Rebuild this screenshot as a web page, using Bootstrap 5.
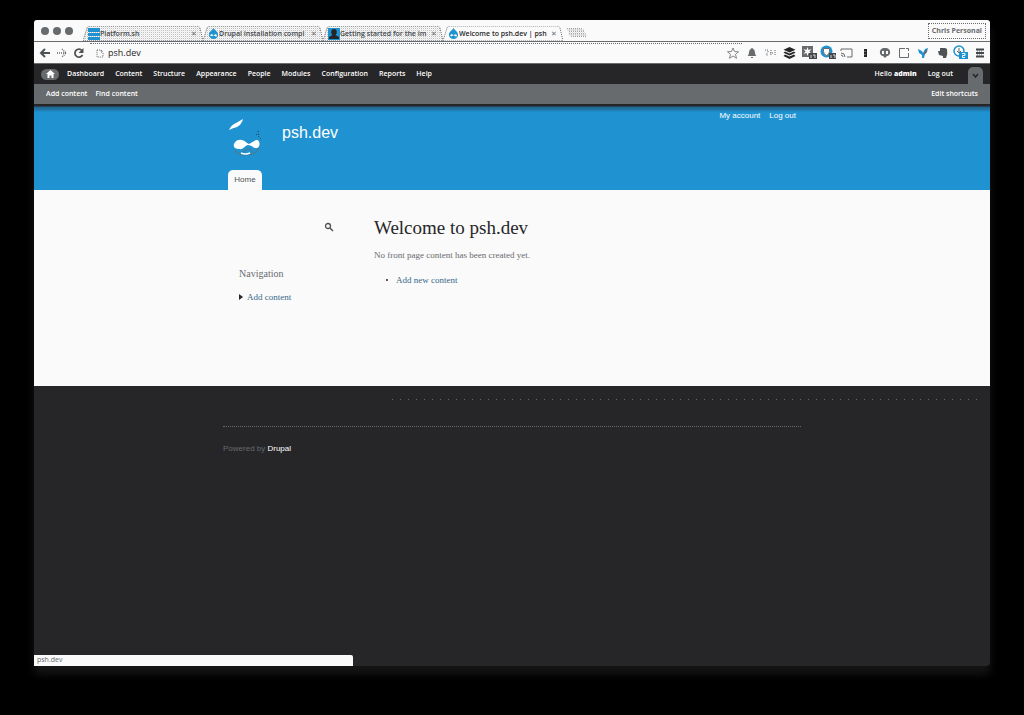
<!DOCTYPE html>
<html lang="en">
<head>
<meta charset="utf-8">
<meta name="viewport" content="width=device-width, initial-scale=1">
<title>Welcome to psh.dev | psh.dev</title>
<link href="https://cdn.jsdelivr.net/npm/bootstrap@5.3.0/dist/css/bootstrap.min.css" rel="stylesheet">
<style>
:root{--ink:#262628;--slate:#676b6e;--sky:#1f93d1;--paper:#fafafa}
body{background:#000;color:var(--slate);font-family:"Open Sans",sans-serif;font-size:7px;line-height:10px}
a{text-decoration:none;color:inherit}
button{background:none;border:0;padding:0;color:inherit}
svg{display:block;flex:none}
.browser{margin:20px 34px 49px;min-height:calc(100vh - 69px);background:var(--ink);border-radius:3px 3px 4px 4px;box-shadow:0 8px 8px #161617}
.tabstrip{height:22px;background:var(--paper);border-bottom:1px solid var(--slate);border-radius:3px 3px 0 0}
.lights{gap:4px;padding-left:7px;width:49px}
.lights i{width:8px;height:8px;border-radius:50%;background:var(--slate)}
.tab{width:120px;height:15px;padding:0 6px 0 5px;font-weight:600;color:#676b6e}
.tab .shape{position:absolute;inset:0;width:100%;height:100%}
.tab>*{position:relative}
.tab .title{font-size:7px;color:#45484b}
.tab.active .title{color:var(--ink)}
.profile{height:16px;padding:0 3px;margin:3px 4px 0 0;border:1px dotted var(--slate);font-size:7px;font-weight:700}
.navbar-row{height:22px;background:var(--paper);border-bottom:1px solid var(--slate);padding:0 1px 0 5px}
.nav-btn{width:17px}
.omnibox{height:19px;border-top:1px dotted var(--slate);padding-left:6px}
.omnibox input{border:0;background:none;outline:0;padding:0;font-size:9px;line-height:16px;height:16px;color:var(--ink)}
.ext{width:19px}
.ext svg{margin:0 auto}
.adminbar{height:20px;background:var(--ink);color:#fff;padding:0 7px;font-weight:600}
.adminbar .links{gap:11px}
.home{width:18px;height:11px;border-radius:6px;background:var(--slate)}
.drawer{width:15px;height:17px;border-radius:5px 5px 0 0;background:var(--slate);color:var(--ink)}
.shortcuts{height:20px;background:var(--slate);color:#fff;padding:0 12px;font-weight:600}
.site{max-width:578px;margin:0 auto;font-family:"Liberation Sans",sans-serif}
.masthead{min-height:86px;background:linear-gradient(var(--ink) 2px,#22658b 3px,#2179ab 6px,var(--sky) 8px);color:#fff}
.masthead .site{height:86px}
.logo{margin:13px 0 0 5px}
.sitename{font-size:16px;line-height:20px;margin:19px 0 0 18px}
.usermenu{font-size:8px;gap:9px;padding:7px 5px 0 0}
.pagetab{width:34px;height:20px;border-radius:5px 5px 0 0;background:var(--paper);color:#505356;font-size:8px;margin-left:5px}
.content-area{min-height:196px;background:var(--paper)}
.content-area .site{font-family:"Liberation Serif",serif}
.sidebar{width:151px;padding:31px 0 0 16px}
.sidebar .search{margin:0 38px 0 auto}
.sidebar h2{font-size:10px;line-height:12px;margin:35px 0 11px}
.welcome{padding-top:26px}
.welcome h1{font-size:19px;line-height:24px;color:var(--ink);margin:0 0 9px}
.welcome p{font-size:9px;line-height:12px;margin:0 0 13px}
.story{color:#37698a;font-size:9px;line-height:12px}
.bullet{width:2px;height:2px;border-radius:50%;background:var(--ink)}
.dots{height:1px;margin:13px 12px 26px 358px;background:repeating-linear-gradient(90deg,var(--slate) 0 1px,transparent 1px 8px)}
.rule{border-top:1px dotted var(--slate);padding-top:17px;font-size:8px}
.statusbar{width:319px;height:11px;background:var(--paper);border-radius:0 2px 0 0;padding-left:3px}
</style>
</head>
<body>
<svg width="0" height="0" class="position-absolute" aria-hidden="true">
<defs>
<pattern id="mesh" width="2" height="2" patternUnits="userSpaceOnUse"><path fill="#676b6e" d="M0 0h1v1H0z" opacity=".75"/><path fill="#676b6e" d="M1 1h1v1H1z" opacity=".2"/></pattern>
<symbol id="drop" viewBox="0 0 12 12"><path fill="#1f93d1" d="M6 0C7 2 11 4 11 7.500a5 4.500 0 0 1-10 0C1 4 5 2 6 0z"/><path fill="#fafafa" d="M3 7c2-1 2.500 1 3.500.500S8.500 6 9.500 7.500 8.500 10 7 8.500s-2 1-3.500.500S2.500 7.500 3 7z"/></symbol>
</defs>
</svg>
<div class="browser d-flex flex-column">
  <header>
    <div class="tabstrip d-flex align-items-end">
      <div class="lights d-flex align-self-center"><i></i><i></i><i></i></div>
      <div class="tab position-relative d-flex align-items-center">
        <svg class="shape" viewBox="0 0 120 15" preserveAspectRatio="none"><path d="M0 15 4 2q1-2 3-2h107q2 0 3 2l3 13z" fill="url(#mesh)" fill-opacity=".55" stroke="#676b6e" stroke-dasharray="1 1"/></svg>
        <svg width="12" height="12" viewBox="0 0 12 12"><path fill="#1f93d1" d="M0 0h12v4H0zM0 5h12v3H0zM0 9h12v3H0z"/></svg>
        <span class="title text-nowrap overflow-hidden flex-grow-1">Platform.sh</span><button aria-label="Close tab">✕</button>
      </div>
      <div class="tab position-relative d-flex align-items-center">
        <svg class="shape" viewBox="0 0 120 15" preserveAspectRatio="none"><path d="M0 15 4 2q1-2 3-2h107q2 0 3 2l3 13z" fill="url(#mesh)" fill-opacity=".55" stroke="#676b6e" stroke-dasharray="1 1"/></svg>
        <svg width="11" height="11"><use href="#drop"/></svg>
        <span class="title text-nowrap overflow-hidden flex-grow-1">Drupal installation compl</span><button aria-label="Close tab">✕</button>
      </div>
      <div class="tab position-relative d-flex align-items-center">
        <svg class="shape" viewBox="0 0 120 15" preserveAspectRatio="none"><path d="M0 15 4 2q1-2 3-2h107q2 0 3 2l3 13z" fill="url(#mesh)" fill-opacity=".55" stroke="#676b6e" stroke-dasharray="1 1"/></svg>
        <svg width="12" height="12" viewBox="0 0 12 12"><path fill="#1f93d1" d="M0 0h12v12H0z"/><path fill="#262628" d="M6 1c4 0 3 5 1.500 6L11 9v2H1V9l3.500-2C3 6 2 1 6 1z"/></svg>
        <span class="title text-nowrap overflow-hidden flex-grow-1">Getting started for the im</span><button aria-label="Close tab">✕</button>
      </div>
      <div class="tab active position-relative d-flex align-items-center">
        <svg class="shape" viewBox="0 0 120 15" preserveAspectRatio="none"><path d="M0 15 4 2q1-2 3-2h107q2 0 3 2l3 13z" fill="#fafafa" stroke="#676b6e" stroke-dasharray="1 1"/></svg>
        <svg width="11" height="11"><use href="#drop"/></svg>
        <span class="title text-nowrap overflow-hidden flex-grow-1">Welcome to psh.dev | psh</span><button aria-label="Close tab">✕</button>
      </div>
      <button class="align-self-end mb-1 ms-1" aria-label="New tab"><svg width="20" height="9" viewBox="0 0 20 11" preserveAspectRatio="none"><path d="M0 0h14q2 0 3 2l3 9H5Q3 11 2 8z" fill="url(#mesh)"/></svg></button>
      <button class="profile ms-auto align-self-start">Chris Personal</button>
    </div>
    <div class="navbar-row d-flex align-items-center">
      <button class="nav-btn" aria-label="Back"><svg width="12" height="12" viewBox="0 0 12 12"><path d="M11 6H2M6 2 2 6l4 4" fill="none" stroke="#505356" stroke-width="2"/></svg></button>
      <button class="nav-btn" aria-label="Forward"><svg width="12" height="12" viewBox="0 0 12 12"><path d="M1 6h9M6 2l4 4-4 4" fill="none" stroke="#676b6e" stroke-width="1.500" stroke-dasharray="1 1"/></svg></button>
      <button class="nav-btn" aria-label="Reload"><svg width="12" height="12" viewBox="0 0 12 12"><path d="M9 3.500A4 4 0 1 0 9.500 8" fill="none" stroke="#505356" stroke-width="1.800"/><path fill="#505356" d="M10.500 1v5h-5z"/></svg></button>
      <div class="omnibox d-flex align-items-center flex-grow-1">
        <svg width="8" height="9" viewBox="0 0 8 9"><path d="M1 1h4l2 2v5H1zM5 1v2h2" fill="none" stroke="#676b6e" stroke-dasharray="1 1"/></svg>
        <label class="visually-hidden" for="address">Address</label>
        <input id="address" class="flex-grow-1 ms-1" type="text" value="psh.dev">
        <button class="ext" aria-label="Bookmark"><svg width="12" height="12" viewBox="0 0 12 12"><path d="m6 1 1.500 3.500 4 .3-3 2.500 1 4L6 9l-3.500 2.300 1-4-3-2.500 4-.3z" fill="none" stroke="#676b6e" stroke-width=".8"/></svg></button>
      </div>
      <button class="ext" aria-label="Notifications"><svg width="12" height="12" viewBox="0 0 12 12"><path fill="#676b6e" d="M6 1c1 0 1 1 1 1 3 1 1 5 3.500 7h-9C4 7 2 3 5 2c0 0 0-1 1-1zM5 10h2v1H5z"/></svg></button>
      <button class="ext" aria-label="Timer"><svg width="13" height="12" viewBox="0 0 13 12"><path d="M1 3h3v2L2 8h2M7 3v6M6 6h3M11 3v6" fill="none" stroke="#676b6e" stroke-dasharray="1 1"/></svg></button>
      <button class="ext" aria-label="Buffer"><svg width="13" height="12" viewBox="0 0 13 12"><path fill="#262628" d="m6.500 0 6 2.700-6 2.700-6-2.700zM2 4.500l4.500 2 4.500-2 1.500 1.200-6 2.800-6-2.800zM2 7.500l4.500 2 4.500-2L12.500 9l-6 3-6-3z"/></svg></button>
      <button class="ext" aria-label="Favorites"><svg width="16" height="15" viewBox="0 0 16 15"><path fill="#676b6e" d="M1 1h11v11H1z"/><path fill="#fafafa" d="m6.500 2 1 3 3-1-2 2.500 2 2.500-3-1-1 3-1-3-3 1 2-2.500-2-2.500 3 1z"/><path fill="#45484b" d="M8 8h8v6H8z"/><path d="M10 10v3M12 10h2v3" stroke="#fafafa" fill="none" stroke-width=".8"/></svg></button>
      <button class="ext" aria-label="Privacy"><svg width="16" height="15" viewBox="0 0 16 15"><circle cx="6.500" cy="6.500" r="6" fill="#1f93d1"/><path fill="#fafafa" stroke="#676b6e" d="M3.500 3.500h6v3q0 3-3 4-3-1-3-4z"/><path fill="#45484b" d="M9 8h7v6H9z"/><path d="M11 10v3M13 10h2v3" stroke="#fafafa" fill="none" stroke-width=".8"/></svg></button>
      <button class="ext" aria-label="Cast"><svg width="13" height="12" viewBox="0 0 13 12"><path d="M1 4V2h11v8H7M1 6q4 0 4 4M1 8q2 0 2 2" fill="none" stroke="#676b6e"/></svg></button>
      <button class="ext" aria-label="Reader"><svg width="13" height="12" viewBox="0 0 13 12"><path fill="#262628" d="M5 2h3v8H5z"/><path fill="#676b6e" d="M5 4h2v1H5zM5 7h2v1H5z"/></svg></button>
      <button class="ext" aria-label="Ghost"><svg width="12" height="12" viewBox="0 0 12 12"><path fill="#676b6e" d="M6 1c7 0 6 8 2 8L6 11 4 9C0 9-1 1 6 1z"/><path fill="#fafafa" d="M3 4h2v3H3zM7 4h2v3H7z"/></svg></button>
      <button class="ext" aria-label="Window"><svg width="12" height="12" viewBox="0 0 12 12"><path d="M7 1.500H1.500v9h9V6M8 1.500h2.500V4" fill="none" stroke="#676b6e"/></svg></button>
      <button class="ext" aria-label="Bird"><svg width="12" height="12" viewBox="0 0 12 12"><path fill="#1f93d1" d="m1 2 4 2 1 2 2-4 3-1-1 4-2 2-1 4H5V8L2 6z"/><path fill="#676b6e" d="m7 5 3-3v3L7 8z"/></svg></button>
      <button class="ext" aria-label="Evernote"><svg width="12" height="12" viewBox="0 0 12 12"><path fill="#505356" d="M4 1h5l2 1q1 5-1 9H7V9L3 8 2 4h2z"/></svg></button>
      <button class="ext" aria-label="Downloads"><svg width="15" height="15" viewBox="0 0 15 15"><circle cx="6" cy="6" r="5" fill="none" stroke="#1f93d1" stroke-width="1.500"/><path d="M6 3v5M4 6l2 2 2-2" fill="none" stroke="#676b6e"/><path fill="#1f93d1" d="M6 7h9v7H6z"/><path d="M9 8.500h3v2H9.500v2H12" fill="none" stroke="#fafafa"/></svg></button>
      <button class="ext" aria-label="Menu"><svg width="10" height="12" viewBox="0 0 10 12"><path d="M1 2.500h8M1 6h8M1 9.500h8" stroke="#45484b" stroke-width="2"/><path d="M2 4h6M2 8h6" stroke="#676b6e" stroke-dasharray="1 1"/></svg></button>
    </div>
  </header>
  <nav class="adminbar d-flex align-items-center" aria-label="Administration">
    <a class="home d-flex justify-content-center align-items-center me-2" href="#" aria-label="Home"><svg width="9" height="8" viewBox="0 0 9 8"><path fill="#fff" d="m4.500 0 4.500 4H7.500v4h-2V5.500h-2V8h-2V4H0z"/></svg></a>
    <div class="links d-flex"><a href="#">Dashboard</a><a href="#">Content</a><a href="#">Structure</a><a href="#">Appearance</a><a href="#">People</a><a href="#">Modules</a><a href="#">Configuration</a><a href="#">Reports</a><a href="#">Help</a></div>
    <div class="links d-flex ms-auto align-self-stretch align-items-center"><a href="#">Hello <b>admin</b></a><a href="#">Log out</a><button class="drawer align-self-end ms-1 d-flex justify-content-center align-items-center" aria-label="Toggle shortcuts"><svg width="7" height="5" viewBox="0 0 7 5"><path d="m1 1 2.500 3L6 1" fill="none" stroke="#262628" stroke-width="1.500"/></svg></button></div>
  </nav>
  <nav class="shortcuts d-flex align-items-center" aria-label="Shortcuts">
    <a href="#">Add content</a><a class="ms-2" href="#">Find content</a><a class="ms-auto" href="#">Edit shortcuts</a>
  </nav>
  <div class="masthead">
    <div class="site d-flex flex-column justify-content-between">
      <div class="d-flex align-items-start">
        <svg class="logo" width="36" height="42" viewBox="0 0 36 42"><path fill="#fff" d="M1 13Q3 8 8 6l7-4q-1 5-6 8-4 1-8 3z"/><path fill="#fff" d="M6 27c2-5 8-6 13-1l2 1 7-4c4-1 5 7 1 8-3 1-5-3-9-3-3 0-4 5-9 4-4 0-6-2-5-5z"/><path d="M7 34q5 5 11 4M21 38q7-1 10-7M15 35q5-5 9-1" fill="none" stroke="#676b6e" stroke-width="1.500" stroke-dasharray="1 1"/><path d="M13 36q4 2 9 0" stroke="#fff" stroke-width="1.500" fill="none"/><path d="M28 17l5 5M30 14l1 5" stroke="#262628" stroke-dasharray="1 2"/></svg>
        <a class="sitename" href="#">psh.dev</a>
        <nav class="usermenu d-flex ms-auto" aria-label="User menu"><a href="#">My account</a><a href="#">Log out</a></nav>
      </div>
      <a class="pagetab d-flex justify-content-center align-items-center" href="#">Home</a>
    </div>
  </div>
  <main class="content-area">
    <div class="site d-flex">
      <aside class="sidebar">
        <button class="search d-block" aria-label="Search"><svg width="12" height="12" viewBox="0 0 12 12"><circle cx="4" cy="5" r="2.500" fill="none" stroke="#505356" stroke-width="1.300"/><path d="m6 7 3 3" stroke="#505356" stroke-width="1.500"/></svg></button>
        <h2>Navigation</h2>
        <a class="story d-flex align-items-center" href="#"><svg class="me-1" width="4" height="6" viewBox="0 0 4 6"><path d="m0 0 4 3-4 3z" fill="#262628"/></svg>Add content</a>
      </aside>
      <section class="welcome">
        <h1>Welcome to psh.dev</h1>
        <p>No front page content has been created yet.</p>
        <ul class="list-unstyled m-0 ps-2"><li class="d-flex align-items-center ps-1"><span class="bullet me-2"></span><a class="story" href="#">Add new content</a></li></ul>
      </section>
    </div>
  </main>
  <footer class="d-flex flex-column flex-grow-1">
    <div class="dots"></div>
    <div class="site w-100"><div class="rule">Powered by <a class="text-white" href="#">Drupal</a></div></div>
    <div class="statusbar mt-auto">psh.dev</div>
  </footer>
</div>
<script src="https://cdn.jsdelivr.net/npm/bootstrap@5.3.0/dist/js/bootstrap.bundle.min.js"></script>
</body>
</html>
